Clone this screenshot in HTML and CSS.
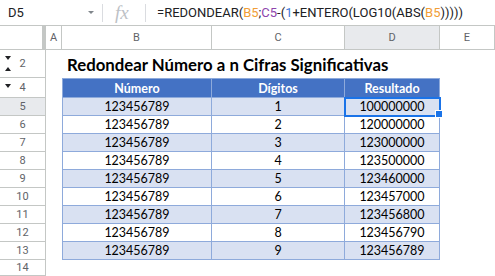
FILE: index.html
```html
<!DOCTYPE html>
<html lang="es">

<head>
    <meta charset="UTF-8">
    <title>Redondear Número a n Cifras Significativas</title>
    <link rel="stylesheet" href="styles.css">
</head>

<body>
    <div class="toolbar">
        <div class="namebox">
            <span>D5</span>
            <span class="caret"></span>
        </div>
        <div class="fx">fx</div>
        <div class="formula">=REDONDEAR(<span class="ref-b">B5</span>;<span class="ref-c">C5</span>-(<span class="num">1</span>+ENTERO(LOG10(ABS(<span class="ref-b">B5</span>)))))</div>
    </div>

    <div class="sheet">
        <div class="corner"></div>
        <div class="colhead">A</div>
        <div class="colhead">B</div>
        <div class="colhead">C</div>
        <div class="colhead active">D</div>
        <div class="colhead">E</div>

        <div class="rowhead">
            <svg class="tri tri-top" width="6" height="5" viewBox="0 0 6 5"><path d="M0 0H6L3 4Z" fill="#202124"/></svg>
            2
            <svg class="tri tri-bottom" width="6" height="5" viewBox="0 0 6 5"><path d="M0 5H6L3 1Z" fill="#202124"/></svg>
        </div>
        <div class="cell"></div>
        <div class="title">Redondear Número a n Cifras Significativas</div>

        <div class="rowhead">
            <svg class="tri tri-top" width="6" height="5" viewBox="0 0 6 5"><path d="M0 0H6L3 4Z" fill="#202124"/></svg>
            4
        </div>
        <div class="cell"></div>
        <div class="th first">Número</div>
        <div class="th">Dígitos</div>
        <div class="th">Resultado</div>
        <div class="cell"></div>
    </div>

    <script>
        const sheet = document.querySelector('.sheet');
        const numero = '123456789';
        let filas = '';

        for (let digitos = 1; digitos <= 9; digitos++) {
            const fila = digitos + 4;
            // redondeo a "digitos" cifras significativas, hecho como texto
            const inicio = numero.slice(0, digitos);
            const siguiente = Number(numero.charAt(digitos) || 0);
            const cifras = String(Number(inicio) + (siguiente >= 5 ? 1 : 0));
            const resultado = cifras.padEnd(numero.length, '0');
            const par = digitos % 2 === 1 ? ' shade' : '';
            const activa = fila === 5 ? ' active' : '';
            filas += `
                <div class="rowhead${activa}">${fila}</div>
                <div class="cell"></div>
                <div class="td first${par}">${numero}</div>
                <div class="td${par}">${digitos}</div>
                <div class="td${par}${fila === 5 ? ' selected' : ''}">${resultado}</div>
                <div class="cell"></div>`;
        }
        filas += '<div class="rowhead">14</div>';
        sheet.insertAdjacentHTML('beforeend', filas);
    </script>
</body>

</html>
```

FILE: styles.css
```css
body {
    margin: 0;
    background-color: white;
    font-family: Roboto, Arial, sans-serif;
    overflow: hidden;
}

.toolbar {
    display: flex;
    align-items: center;
    height: 26px;
    border-bottom: 1px solid #c4c7c5;
    box-sizing: border-box;
}

.namebox {
    display: flex;
    align-items: center;
    justify-content: space-between;
    width: 103px;
    height: 18px;
    padding: 0 8px 0 8px;
    box-sizing: border-box;
    border-right: 1px solid #dadce0;
    font-size: 13px;
    color: #202124;
}

.caret {
    width: 0;
    height: 0;
    border-left: 3px solid transparent;
    border-right: 3px solid transparent;
    border-top: 3px solid #80868b;
}

.fx {
    width: 43px;
    height: 18px;
    line-height: 18px;
    padding-left: 12px;
    box-sizing: border-box;
    border-right: 1px solid #dadce0;
    font-family: "Liberation Serif", serif;
    font-style: italic;
    font-size: 19px;
    color: #bdc1c6;
}

.formula {
    padding-left: 11px;
    font-size: 13px;
    color: #202124;
    white-space: nowrap;
}

.ref-b {
    color: #f19e36;
}

.ref-c {
    color: #8e44ad;
}

.num {
    color: #3d79d8;
}

.sheet {
    display: grid;
    grid-template-columns: 46px 16px 150px 133px 95px 55px;
    grid-template-rows: 24px 28px 20px repeat(9, 18px) 16px;
}

.corner {
    border-right: 4px solid #c4c7c5;
    border-bottom: 1px solid #c4c7c5;
}

.colhead {
    display: flex;
    align-items: center;
    justify-content: center;
    border-right: 1px solid #c4c7c5;
    border-bottom: 1px solid #c4c7c5;
    font-size: 11px;
    color: #5f6368;
}

.rowhead {
    position: relative;
    display: flex;
    align-items: center;
    justify-content: center;
    border-right: 1px solid #c4c7c5;
    border-bottom: 1px solid #c4c7c5;
    font-size: 11px;
    color: #5f6368;
}

.colhead.active,
.rowhead.active {
    background-color: #e8eaed;
}

.tri {
    position: absolute;
    left: 5px;
}

.tri-top {
    top: 6px;
}

.tri-bottom {
    bottom: 6px;
}

.title {
    grid-column: 3 / -1;
    padding: 0 0 3px 5px;
    display: flex;
    align-items: flex-end;
    font-family: Lato, sans-serif;
    font-weight: bold;
    font-size: 16.8px;
    color: #000;
    white-space: nowrap;
}

.th,
.td {
    display: flex;
    align-items: center;
    justify-content: center;
    border-right: 1px solid #8eaadb;
    border-bottom: 1px solid #8eaadb;
    font-family: Lato, sans-serif;
    font-size: 12.5px;
    color: #000;
}

.th {
    background-color: #4472c4;
    border-top: 1px solid #8eaadb;
    color: white;
    font-weight: bold;
}

.first {
    border-left: 1px solid #8eaadb;
}

.shade {
    background-color: #d9e1f2;
}

.selected {
    position: relative;
    outline: 2px solid #1a73e8;
    outline-offset: -1px;
}

.selected::after {
    content: "";
    position: absolute;
    right: -4px;
    bottom: -3px;
    width: 6px;
    height: 6px;
    background-color: #1a73e8;
    border: 1px solid white;
}
```
